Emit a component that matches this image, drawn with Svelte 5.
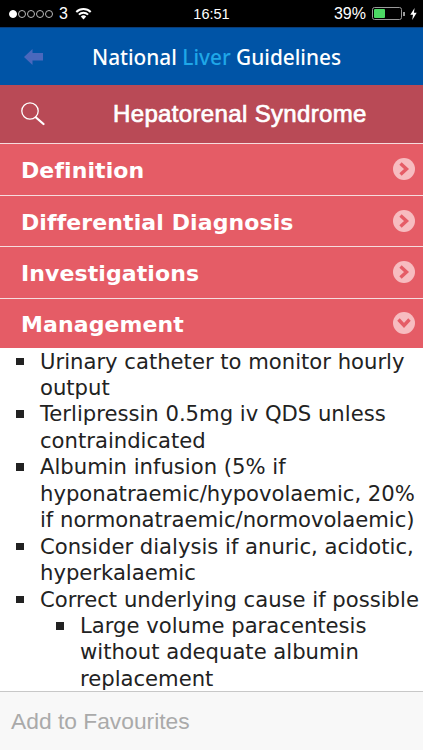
<script lang="ts">
    const sections = ['Definition', 'Differential Diagnosis', 'Investigations'];
    let dots = [true, false, false, false, false];
</script>

<main>
    <div class="status">
        <div class="left">
            <span class="dots">
                {#each dots as on}
                <i class="dot {on ? 'on' : ''}"></i>
                {/each}
            </span>
            <span class="carrier">3</span>
            <svg class="wifi" width="17" height="13" viewBox="0 0 17 13">
                <path d="M0.6 4.3 A11.2 11.2 0 0 1 16.4 4.3 L15 5.7 A9.2 9.2 0 0 0 2 5.7 Z" fill="#fff"/>
                <path d="M3.2 6.9 A7.6 7.6 0 0 1 13.8 6.9 L12.4 8.3 A5.6 5.6 0 0 0 4.6 8.3 Z" fill="#fff"/>
                <path d="M5.8 9.5 A3.9 3.9 0 0 1 11.2 9.5 L8.5 12.4 Z" fill="#fff"/>
            </svg>
        </div>
        <div class="time">16:51</div>
        <div class="right">
            <span class="pct">39%</span>
            <span class="battery"><span class="level"></span></span>
            <span class="nub"></span>
            <svg class="bolt" width="7" height="12" viewBox="0 0 7 12">
                <path d="M4.6 0 L0.3 6.8 H3 L2.2 12 L6.7 4.8 H3.9 Z" fill="#fff"/>
            </svg>
        </div>
    </div>

    <header class="nav">
        <svg class="back" width="19" height="16" viewBox="0 0 19 16">
            <path d="M0 8 L8.5 0 V4 H19 V11.5 H8.5 V16 Z" fill="#4a68bd"/>
        </svg>
        <h1>National <span class="liver">Liver</span> Guidelines</h1>
    </header>

    <div class="search">
        <svg class="lens" width="25" height="25" viewBox="0 0 25 25">
            <circle cx="9" cy="9" r="8.2" fill="none" stroke="#fff" stroke-width="1.3"/>
            <path d="M15 15.5 L22.5 22" stroke="#fff" stroke-width="2.3" stroke-linecap="round"/>
        </svg>
        <h2>Hepatorenal Syndrome</h2>
    </div>

    {#each sections as s}
    <div class="row">
        <span>{s}</span>
        <svg class="chev" width="22" height="22" viewBox="0 0 22 22">
            <circle cx="11" cy="11" r="11" fill="#f7bcc0"/>
            <path d="M7.5 5.5 L13.5 11 L7.5 16.5" fill="none" stroke="#e55c66" stroke-width="3.4"/>
        </svg>
    </div>
    {/each}
    <div class="row last">
        <span>Management</span>
        <svg class="chev" width="22" height="22" viewBox="0 0 22 22">
            <circle cx="11" cy="11" r="11" fill="#f7bcc0"/>
            <path d="M5.5 7.5 L11 13.5 L16.5 7.5" fill="none" stroke="#e55c66" stroke-width="3.4"/>
        </svg>
    </div>

    <div class="content">
        <ul>
            <li>Urinary catheter to monitor hourly output</li>
            <li>Terlipressin 0.5mg iv QDS unless contraindicated</li>
            <li>Albumin infusion (5% if hyponatraemic/hypovolaemic, 20% if normonatraemic/normovolaemic)</li>
            <li>Consider dialysis if anuric, acidotic, hyperkalaemic</li>
            <li>Correct underlying cause if possible
                <ul>
                    <li>Large volume paracentesis without adequate albumin replacement</li>
                </ul>
            </li>
        </ul>
    </div>

    <footer>Add to Favourites</footer>
</main>

<style>
    :global(body) {
        margin: 0;
    }
    main {
        width: 423px;
        height: 750px;
        display: flex;
        flex-direction: column;
        overflow: hidden;
        background-color: #fff;
    }
    .status {
        height: 27px;
        flex: none;
        background-color: #000;
        color: #fff;
        display: grid;
        grid-template-columns: 1fr auto 1fr;
        align-items: center;
        font-family: "Liberation Sans", sans-serif;
        font-size: 15px;
        padding: 0 6px;
        box-sizing: border-box;
    }
    .left, .right {
        display: flex;
        align-items: center;
    }
    .left {
        padding-left: 3px;
    }
    .right {
        justify-content: flex-end;
    }
    .time {
        font-size: 14.5px;
    }
    .dots {
        display: flex;
        gap: 1px;
    }
    .dot {
        width: 8px;
        height: 8px;
        box-sizing: border-box;
        border: 1px solid #bbb;
        border-radius: 50%;
    }
    .dot.on {
        background-color: #fff;
        border-color: #fff;
    }
    .carrier {
        font-size: 16px;
        margin-left: 6px;
    }
    .wifi {
        margin-left: 7px;
    }
    .pct {
        margin-right: 6px;
        font-size: 16px;
    }
    .battery {
        width: 30px;
        height: 13px;
        box-sizing: border-box;
        border: 1px solid #999;
        border-radius: 2.5px;
        padding: 1px;
        display: block;
    }
    .level {
        display: block;
        width: 11px;
        height: 100%;
        background-color: #4cd964;
        border-radius: 1px;
    }
    .nub {
        width: 2px;
        height: 4px;
        background-color: #999;
        margin-left: 1px;
    }
    .bolt {
        margin-left: 5px;
    }
    .nav {
        height: 58px;
        flex: none;
        box-sizing: border-box;
        border-top: 1px solid #0a3c78;
        background-color: #0054a6;
        display: flex;
        align-items: center;
        padding-left: 24px;
    }
    h1 {
        margin: 0 0 0 49px;
        font-family: "Noto Sans", sans-serif;
        font-size: 20.8px;
        font-weight: 500;
        color: #fff;
    }
    .liver {
        color: #1fa7e8;
    }
    .search {
        height: 58px;
        flex: none;
        background-color: #b94a56;
        display: flex;
        align-items: center;
        padding-left: 21px;
        box-sizing: border-box;
    }
    h2 {
        margin: 0 0 0 67px;
        font-family: "Liberation Sans", sans-serif;
        font-size: 24px;
        font-weight: 400;
        letter-spacing: 0.35px;
        -webkit-text-stroke: 0.7px #fff;
        color: #fff;
    }
    .row {
        height: 51.5px;
        flex: none;
        box-sizing: border-box;
        background-color: #e55c66;
        border-top: 1.5px solid #f6dcde;
        display: flex;
        align-items: center;
        justify-content: space-between;
        padding: 0 8.5px 0 21px;
        font-family: "DejaVu Sans", sans-serif;
        font-size: 22px;
        font-weight: 700;
        letter-spacing: 0.1px;
        color: #fff;
    }
    .row span {
        padding-top: 3px;
    }
    .row.last {
        height: 50px;
    }
    .content {
        flex: 1;
        min-height: 0;
        overflow: hidden;
        padding-top: 1px;
        font-family: "DejaVu Sans", sans-serif;
        font-size: 21.15px;
        line-height: 26.45px;
        color: #222;
    }
    ul {
        margin: 0;
        padding: 0 0 0 40px;
        list-style: none;
    }
    li {
        position: relative;
    }
    li::before {
        content: "";
        position: absolute;
        left: -24px;
        top: 9px;
        width: 7.5px;
        height: 7.5px;
        background-color: #222;
    }
    footer {
        height: 59px;
        flex: none;
        box-sizing: border-box;
        border-top: 1px solid #c8c8c8;
        background-color: #f8f8f8;
        padding: 16px 0 0 11px;
        font-family: "Liberation Sans", sans-serif;
        font-size: 22.8px;
        color: #aaa;
    }
</style>
